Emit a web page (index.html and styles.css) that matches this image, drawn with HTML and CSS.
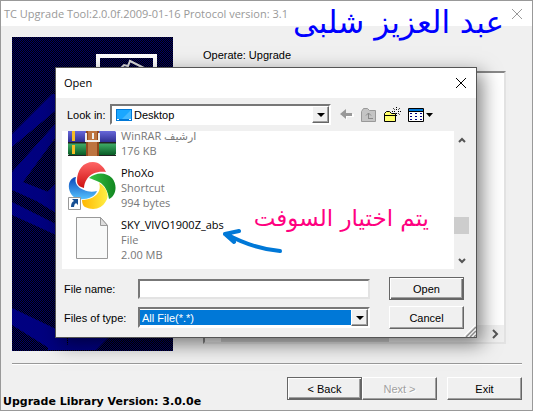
FILE: index.html
```
<!DOCTYPE html>
<html lang="en">
<head>
<meta charset="utf-8">
<title>TC Upgrade Tool</title>
<link rel="stylesheet" href="styles.css">
</head>
<body>
<div class="window">
  <header class="titlebar">
    <h1 class="title">TC Upgrade Tool:2.0.0f.2009-01-16 Protocol version: 3.1</h1>
    <button class="close muted" aria-label="Close window"><svg width="12" height="12" viewBox="0 0 12 12"><path d="M1 1L11 11M11 1L1 11"/></svg></button>
  </header>
  <main class="main">
    <svg class="banner" aria-hidden="true">
      <g fill="#000080">
        <path d="M40 57H60V60L0 110V97zM44 86V100L11 145 44 158V173L0 153V135zM26 165L44 146V176zM0 165L44 187V198L0 178zM0 271L44 292 55 302V313H40L0 288z"/>
        <path d="M36 290L56 308V300H97L84 313H36z"/>
      </g>
      <rect x="86" y="19" width="57" height="50" fill="none" stroke="#fff" stroke-width="4"/>
      <path d="M106 34l6-6 4 1 2-5 14 7" fill="none" stroke="#ddd" stroke-width="2"/>
    </svg>
    <section class="content">
      <h2 class="operate">Operate: Upgrade</h2>
      <div class="log"><div class="log-bar"><span class="log-thumb"></span><svg width="8" height="10" viewBox="0 0 8 10"><path d="M2 1L6 5 2 9"/></svg></div></div>
    </section>
  </main>
  <footer class="footer">
    <p class="version">Upgrade Library Version: 3.0.0e</p>
    <div class="actions">
      <button class="btn default">&lt; Back</button><button class="btn" disabled>Next &gt;</button><button class="btn exit">Exit</button>
    </div>
  </footer>

  <div class="dialog" role="dialog" aria-labelledby="dialog-title">
    <header class="dialog-title">
      <h2 id="dialog-title">Open</h2>
      <button class="close" aria-label="Close dialog"><svg width="12" height="12" viewBox="0 0 12 12"><path d="M1 1L11 11M11 1L1 11"/></svg></button>
    </header>
    <div class="lookin">
      <label for="place">Look in:</label>
      <div class="select place">
        <svg class="desk" width="16" height="12" viewBox="0 0 16 12"><path fill="#0078d7" d="M0 0h16v12H0z"/><path fill="#1aa7ff" d="M1 1h14v9H1z"/><path fill="#45b9ff" d="M15 1v9H6z"/><path fill="#fff" d="M1 10h2v1H1zM13 10h2v1h-2z"/></svg>
        <select id="place"><option>Desktop</option></select>
        <span class="drop"></span>
      </div>
      <div class="tools">
        <button aria-label="Back"><svg width="14" height="11" viewBox="0 0 14 11"><path fill="#fff" d="M1 6L7 11V8H14V5z"/><path fill="#999" d="M0 5L6 0V4H12V7H6V10z"/></svg></button>
        <button aria-label="Up one level"><svg width="16" height="14" viewBox="0 0 16 14"><path fill="#c4c4c4" stroke="#999" d="M.5 13.500V3.500L2.500 .500H6.500L8.500 2.500H14.500V13.500z"/><path d="M7.500 10V5M5 7.500L7.500 5 10 7.500M7 10.500H12" fill="none" stroke="#888"/></svg></button>
        <button aria-label="New folder"><svg width="17" height="15" viewBox="0 0 17 15"><path fill="#ffff6b" stroke="#000" d="M.5 14.500V6.500L2.500 4.500H5.500L7.500 6.500H11.500V14.500z"/><path d="M1 8.500H11" stroke="#000"/><path stroke="#000" d="M12.500 0V3M12.500 6V9M8 4.500H11M14 4.500H17M9 1L11 3M16 1L14 3M14 6L16 8" stroke-dasharray="1 1"/></svg></button>
        <button class="views" aria-label="View menu"><svg width="25" height="14" viewBox="0 0 25 14"><path fill="#fff" stroke="#000" d="M.5 .5H15.500V13.500H.5z"/><path fill="#0078d7" d="M1 1H15V3H1z"/><path d="M0 3.500H16" stroke="#000"/><path d="M2 5.500h2M2 8.500h2M2 11.500h2M7 5.500h2M7 8.500h2M7 11.500h2M12 5.500h2M12 8.500h2M12 11.500h2" stroke="#000080"/><path d="M18 5H25L21.500 9z"/></svg></button>
      </div>
    </div>
    <div class="files">
      <ul class="list">
        <li class="file">
          <svg class="icon" width="48" height="48" viewBox="0 0 48 48">
            <defs><linearGradient id="vio" x2="0" y2="1"><stop stop-color="#6d6de0"/><stop offset="1" stop-color="#2a2a8c"/></linearGradient><linearGradient id="grn" x2="0" y2="1"><stop stop-color="#42b06a"/><stop offset="1" stop-color="#04541f"/></linearGradient></defs>
            <path fill="#a3389f" d="M0 7H48V20H0z"/><path fill="url(#vio)" d="M0 20H46L48 22V33H0z"/><path fill="url(#grn)" d="M0 33H48V44L46 46H2L0 44z"/><path fill="#222" d="M0 32H48V33.500H0zM0 45H48V46H0z"/>
            <path fill="#f5bd24" d="M4 20H7V31H4zM4 35H7V44H4z"/><path fill="#91491c" d="M18 18H31V46H18z"/><path fill="#bd7440" d="M20 20H29V46H20z"/><path fill="none" stroke="#eee" stroke-width="2" d="M18 23V31H31V23"/><path stroke="#eee" stroke-width="2" d="M25 23V29"/>
          </svg>
          <div class="info"><span class="line">WinRAR ارشيف</span><span class="line">176 KB</span></div>
        </li>
        <li class="file">
          <svg class="icon" width="48" height="48" viewBox="0 0 48 48">
            <defs><linearGradient id="red" x2="0" y2="1"><stop stop-color="#f66"/><stop offset="1" stop-color="#cd1010"/></linearGradient><linearGradient id="leaf"><stop stop-color="#39c443"/><stop offset="1" stop-color="#118620"/></linearGradient><linearGradient id="sun"><stop stop-color="#ffb600"/><stop offset="1" stop-color="#ffef45"/></linearGradient><linearGradient id="blue" x2="0" y2="1"><stop stop-color="#0a45b8"/><stop offset="1" stop-color="#55c2ff"/></linearGradient></defs>
            <path fill="url(#red)" d="M9 19C9 8 15 0 25 0C31 0 36 5 38 10C30 9 23 11 19 17C17 20 16 23 16 26C12 25 9 23 9 19z"/>
            <path fill="url(#leaf)" d="M21 16C28 10 38 10 44 16C50 23 48 34 41 37C40 30 37 23 31 20C27 18 24 17 21 16z"/>
            <path fill="url(#sun)" d="M31 21C38 25 42 33 38 39C34 47 25 49 17 45C15 44 14 41 14 38C22 38 29 34 31 29C32 26 32 23 31 21z"/>
            <path fill="url(#blue)" d="M8 15C6 21 10 26 16 28C20 30 25 30 29 29C27 35 19 38 10 37C3 35 0 28 1 22C2 18 5 15 8 15z"/>
            <path fill="#fff" stroke="#999" d="M.5 35.500H12.500V47.500H.5z"/><path fill="#174f93" d="M4 37H10V43L8 41Q6 42 6 45H3Q3 40 6 39z"/>
          </svg>
          <div class="info"><span class="line name">PhoXo</span><span class="line">Shortcut</span><span class="line">994 bytes</span></div>
        </li>
        <li class="file">
          <svg class="icon" width="48" height="48" viewBox="0 0 48 48"><path fill="#f8f9f9" stroke="#999" d="M8.500 3.500H32.500L39.500 11.500V44.500H8.500z"/><path fill="#ddd" stroke="#999" d="M32.500 3.500V11.500H39.500z"/></svg>
          <div class="info"><span class="line name">SKY_VIVO1900Z_abs</span><span class="line">File</span><span class="line">2.00 MB</span></div>
        </li>
      </ul>
      <div class="scroll" aria-hidden="true">
        <svg width="8" height="8" viewBox="0 0 8 8"><path d="M1 6L4 3 7 6"/></svg>
        <span class="thumb"></span>
        <svg width="8" height="8" viewBox="0 0 8 8"><path d="M1 2L4 5 7 2"/></svg>
      </div>
    </div>
    <form class="fields">
      <label for="fname">File name:</label>
      <input id="fname" class="text" type="text">
      <button class="btn default" type="button">Open</button>
      <label for="ftype">Files of type:</label>
      <div class="select type"><select id="ftype"><option>All File(*.*)</option></select><span class="drop"></span></div>
      <button class="btn" type="button">Cancel</button>
    </form>
    <svg class="grip" width="12" height="12" viewBox="0 0 12 12" aria-hidden="true"><path stroke="#fff" d="M0 11L11 0M4 11L11 4M8 11L11 8"/><path stroke="#888" stroke-width="1.500" d="M2 12L12 2M6 12L12 6M10 12L12 10"/></svg>
  </div>

  <p class="note author" dir="rtl" lang="ar">عبد العزيز شلبى</p>
  <p class="note hint" dir="rtl" lang="ar">يتم اختيار السوفت</p>
  <svg class="arrow" width="64" height="30" viewBox="0 0 64 30" aria-hidden="true"><path d="M60 24Q34 22 6 7M5 7L19 4M5 7L14 15" /></svg>
</div>
</body>
</html>
```
FILE: styles.css
```
* { box-sizing: border-box; }
body { margin: 0; font: 11px/14px "Liberation Sans", sans-serif; color: #000; }
h1, h2, p, ul { margin: 0; padding: 0; font-size: inherit; font-weight: normal; }
button, select, input { font: inherit; color: inherit; border-radius: 0; }
svg { display: block; flex: none; }

.window { position: relative; display: flex; flex-direction: column; min-height: 100vh; border: 1px solid #999; background: #f0f0f0; overflow: hidden; }
.titlebar { display: flex; align-items: center; justify-content: space-between; height: 25px; padding: 0 9px 0 3px; background: #fff; }
.title { font: 11px/16px "Open Sans", sans-serif; color: #999; white-space: nowrap; }
.close { padding: 0; border: 0; background: none; }
.close path { stroke: #000; fill: none; }
.close.muted path { stroke: #999; }

.main { display: flex; flex: 1; gap: 30px; padding: 11px 26px 12px 11px; }
.banner { width: 161px; height: auto; align-self: stretch; background: repeating-conic-gradient(#000068 0 25%, #000 0 50%) 0 0 / 2px 2px; }
.content { display: flex; flex: 1; flex-direction: column; gap: 9px; padding: 11px 0 7px; }
.operate { font-size: 11px; line-height: 14px; }
.log { display: flex; flex: 1; flex-direction: column; justify-content: flex-end; border: 2px solid; border-color: #888 #e3e3e3 #e3e3e3 #888; background: #fff; }
.log-bar { display: flex; align-items: center; justify-content: space-between; height: 17px; padding: 0 5px 0 16px; background: #f0f0f0; }
.log-thumb { width: 168px; height: 17px; background: #cdcdcd; }
.log-bar path, .scroll path { fill: none; stroke: #555; stroke-width: 2; }

.footer { display: flex; align-items: flex-start; justify-content: space-between; height: 47px; margin: 0 10px 0 11px; border-top: 1px solid #999; box-shadow: inset 0 1px #fff; }
.version { align-self: flex-end; margin-left: -9px; font: bold 11px/17px "DejaVu Sans", sans-serif; white-space: nowrap; }
.actions { display: flex; padding-top: 13px; }
.btn { width: 75px; height: 23px; padding: 0; border: 1px solid; border-color: #fff #666 #666 #fff; background: #f0f0f0; box-shadow: inset -1px -1px #a0a0a0; font-size: 11px; }
.btn.default { border-color: #666; box-shadow: inset 1px 1px #fff, inset -1px -1px #666, inset -2px -2px #a0a0a0; }
.btn:disabled { color: #a0a0a0; text-shadow: 1px 1px #fff; }
.exit { margin-left: 10px; }

.dialog { position: absolute; top: 66px; left: 54px; width: 422px; border: 1px solid #555; background: #f0f0f0; box-shadow: 5px 6px 18px rgba(0, 0, 0, .5); }
.dialog-title { display: flex; align-items: center; justify-content: space-between; height: 30px; padding: 0 9px 0 8px; background: #fff; font: 11px/16px "Open Sans", sans-serif; }
.lookin { display: flex; align-items: center; height: 33px; padding-left: 11px; }
.lookin label { width: 43px; }
.select { position: relative; display: flex; align-items: center; height: 21px; border: 2px solid; border-color: #777 #fff #fff #777; background: #fff; }
.select select { flex: 1; align-self: stretch; min-width: 0; padding: 0 2px; border: 0; background: none; appearance: none; outline: 0; }
.place { width: 221px; padding-left: 4px; }
.drop { display: grid; place-items: center; width: 17px; height: 17px; border: 1px solid; border-color: #fff #666 #666 #fff; background: #f0f0f0; box-shadow: inset -1px -1px #a0a0a0; pointer-events: none; }
.drop::after { content: ""; border: 4px solid transparent; border-top-color: #000; border-bottom: 0; }
.tools { display: flex; align-items: center; gap: 7px; padding-left: 9px; }
.tools button { padding: 0; border: 0; background: none; }
.files { display: flex; height: 138px; margin: 0 7px 0 6px; background: #fff; }
.list { display: flex; flex: 1; flex-direction: column; justify-content: flex-end; gap: 4px; padding: 0 0 7px 6px; overflow: hidden; list-style: none; }
.file { display: flex; align-items: flex-end; gap: 5px; height: 48px; flex: none; }
.info { display: flex; flex-direction: column; font: 11px/15px "Open Sans", "DejaVu Sans", sans-serif; color: #777; }
.name { color: #000; }
.scroll { display: flex; flex-direction: column; align-items: center; width: 15px; padding: 5px 0 4px; background: #f0f0f0; }
.thumb { width: 15px; height: 17px; margin: auto 0 23px; background: #cdcdcd; }
.fields { display: grid; grid-template-columns: 74px 232px 75px; align-items: center; row-gap: 6px; padding: 8px 0 8px 8px; }
.fields .btn { justify-self: end; margin-right: -19px; }
.text { width: 232px; height: 20px; padding: 0 3px; border: 2px solid; border-color: #777 #e3e3e3 #e3e3e3 #777; background: #fff; }
.type select { margin: 1px 0; background: #0078d7; color: #fff; }
.grip { position: absolute; right: 0; bottom: 0; }

.note { position: absolute; font-family: "DejaVu Sans", sans-serif; white-space: nowrap; }
.author { top: 3px; right: 28px; font-size: 31px; line-height: 36px; color: #00f; }
.hint { top: 203px; right: 103px; font-size: 23px; line-height: 28px; color: #ff0080; }
.arrow { position: absolute; top: 226px; left: 219px; }
.arrow path { fill: none; stroke: #0078d7; stroke-width: 4; stroke-linecap: round; }
```
